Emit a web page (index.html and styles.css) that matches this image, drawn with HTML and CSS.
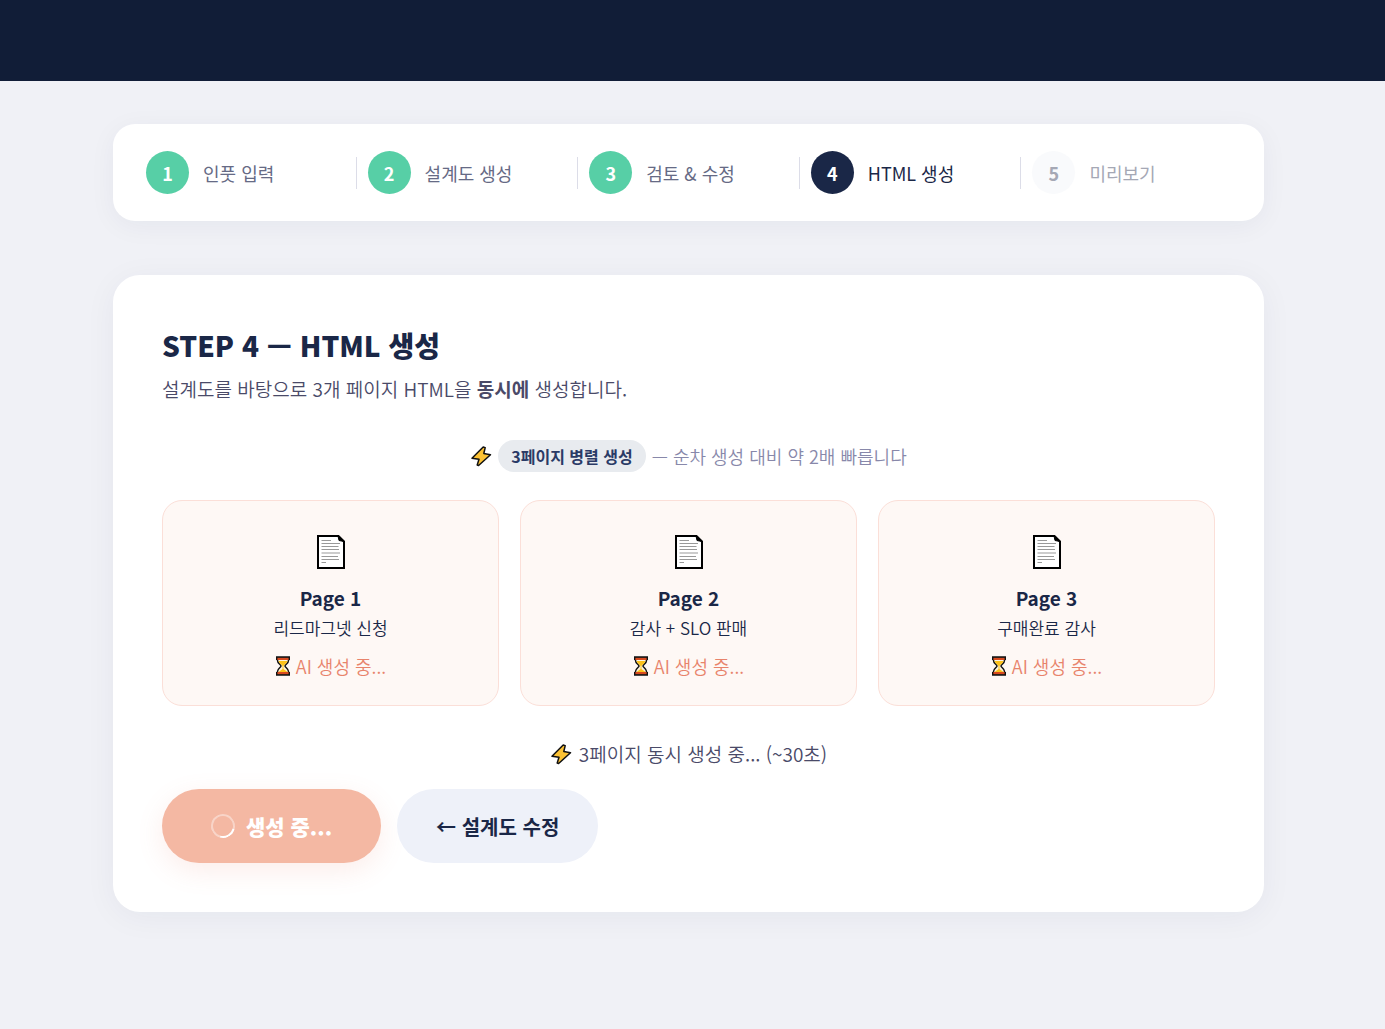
FILE: index.html
```html
<!DOCTYPE html>
<html lang="ko">

<head>
  <meta charset="UTF-8">
  <meta name="viewport" content="width=device-width, initial-scale=1.0">
  <title>STEP 4 — HTML 생성</title>
  <link rel="stylesheet" href="styles.css">
</head>

<body>
  <!-- Shared icons -->
  <svg class="sprite" aria-hidden="true">
    <symbol id="icon-bolt" viewBox="0 0 22 24">
      <path d="M13.200 3 L2 14.200 L9 15.200 L7.200 21 L8.600 21.500 L20.500 10.800 L13.800 9.500 L15.200 3.600 Z" fill="#fcc234" stroke="#111" stroke-width="1.500" stroke-linejoin="round" />
    </symbol>
    <symbol id="icon-page" viewBox="0 0 30 36">
      <path d="M2 2 H22.500 L28 7.500 V34 H2 Z" fill="#fff" stroke="#000" stroke-width="2" />
      <path d="M22 2 L23 6.500 L28 7.500 Z" fill="#000" stroke="#000" stroke-width="1" />
      <path d="M5.500 6.500H15M5.500 9.500H24M5.500 12.500H22.500M5.500 15.500H23M5.500 19H24M5.500 22.500H22M5.500 25.500H23M5.500 28.500H10" stroke="#999" stroke-width="1" />
    </symbol>
    <symbol id="icon-hourglass" viewBox="0 0 16 20">
      <path d="M2.500 2 H13.500 V4.500 C13.500 7.500 10 8.500 10 10 S13.500 12.500 13.500 15.500 V18 H2.500 V15.500 C2.500 12.500 6 11.500 6 10 S2.500 7.500 2.500 4.500 Z" fill="#fdf3dc" stroke="#111" stroke-width="1.500" />
      <path d="M3.500 5 H12.500 C12 7.500 9 8.500 8.500 10 V13 L12.500 16 H3.500 L7.500 13 V10 C7 8.500 4 7.500 3.500 5 Z" fill="#fcc21b" />
      <path d="M2 1.500 H14 V4 H2 Z M2 16 H14 V18.500 H2 Z" fill="#d84a1f" />
      <path d="M1 1 H15 M1 19 H15 M1.700 1 V4 M14.300 1 V4 M1.700 16 V19 M14.300 16 V19" stroke="#111" stroke-width="1.400" />
    </symbol>
  </svg>

  <header class="topbar"></header>

  <main class="container">
    <!-- Step indicator -->
    <ol class="steps">
      <li class="step done"><span class="step-num">1</span><span>인풋 입력</span></li>
      <li class="divider" role="presentation"></li>
      <li class="step done"><span class="step-num">2</span><span>설계도 생성</span></li>
      <li class="divider" role="presentation"></li>
      <li class="step done"><span class="step-num">3</span><span>검토 &amp; 수정</span></li>
      <li class="divider" role="presentation"></li>
      <li class="step active" aria-current="step"><span class="step-num">4</span><span>HTML 생성</span></li>
      <li class="divider" role="presentation"></li>
      <li class="step"><span class="step-num">5</span><span>미리보기</span></li>
    </ol>

    <section class="card">
      <h1>STEP 4 — HTML 생성</h1>
      <p class="desc">설계도를 바탕으로 3개 페이지 HTML을 <strong>동시에</strong> 생성합니다.</p>

      <p class="notice">
        <svg class="bolt" aria-hidden="true"><use href="#icon-bolt" /></svg>
        <span class="badge">3페이지 병렬 생성</span>
        <span>— 순차 생성 대비 약 2배 빠릅니다</span>
      </p>

      <!-- Page progress -->
      <div class="pages">
        <article class="page">
          <svg class="page-icon" aria-hidden="true"><use href="#icon-page" /></svg>
          <h2>Page 1</h2>
          <p class="page-name">리드마그넷 신청</p>
          <p class="page-status"><svg class="hourglass" aria-hidden="true"><use href="#icon-hourglass" /></svg>AI 생성 중...</p>
        </article>
        <article class="page">
          <svg class="page-icon" aria-hidden="true"><use href="#icon-page" /></svg>
          <h2>Page 2</h2>
          <p class="page-name">감사 + SLO 판매</p>
          <p class="page-status"><svg class="hourglass" aria-hidden="true"><use href="#icon-hourglass" /></svg>AI 생성 중...</p>
        </article>
        <article class="page">
          <svg class="page-icon" aria-hidden="true"><use href="#icon-page" /></svg>
          <h2>Page 3</h2>
          <p class="page-name">구매완료 감사</p>
          <p class="page-status"><svg class="hourglass" aria-hidden="true"><use href="#icon-hourglass" /></svg>AI 생성 중...</p>
        </article>
      </div>

      <p class="progress"><svg class="bolt" aria-hidden="true"><use href="#icon-bolt" /></svg>3페이지 동시 생성 중... (~30초)</p>

      <div class="actions">
        <button type="button" class="btn btn-primary" disabled><span class="spinner"></span>생성 중...</button>
        <button type="button" class="btn btn-secondary">← 설계도 수정</button>
      </div>
    </section>
  </main>
</body>

</html>
```
FILE: styles.css
```css
* {
  box-sizing: border-box;
}

body {
  font-family: "Noto Sans CJK KR", sans-serif;
  font-weight: 350;
  background: #f0f1f6;
  margin: 0;
  color: #1a2747;
}

h1, h2, p, ol {
  margin: 0;
  padding: 0;
}

.sprite {
  display: none;
}

.topbar {
  height: 81px;
  background: #111d37;
}

.container {
  padding: 43px 121px 80px 113px;
}

.steps {
  display: flex;
  align-items: center;
  list-style: none;
  padding: 27px 33px;
  margin-bottom: 54px;
  background: #fff;
  border-radius: 22px;
  box-shadow: 0 5px 27px rgba(26, 39, 71, 0.05);
}

.step {
  display: flex;
  flex: 1;
  align-items: center;
  gap: 14px;
  font-size: 18px;
  font-weight: 400;
  white-space: nowrap;
  color: #a5a8b5;
}

.step-num {
  display: flex;
  align-items: center;
  justify-content: center;
  width: 43px;
  height: 43px;
  border-radius: 50%;
  background: #f9fafc;
  font-size: 18px;
  font-weight: 700;
}

.done {
  color: #666a85;
}

.done .step-num {
  background: #57cfa6;
  color: #fff;
}

.active {
  color: #1a2747;
}

.active .step-num {
  background: #1a2747;
  color: #fff;
}

.divider {
  width: 1px;
  height: 32px;
  margin: 0 11px;
  background: #dcdde8;
}

.card {
  padding: 49px;
  background: #fff;
  border-radius: 27px;
  box-shadow: 0 5px 32px rgba(26, 39, 71, 0.05);
}

h1 {
  font-size: 28px;
  font-weight: 800;
  line-height: 42px;
}

.desc {
  margin-top: 7px;
  font-size: 19px;
  line-height: 32px;
  color: #4a4a68;
}

.notice {
  display: flex;
  align-items: center;
  justify-content: center;
  gap: 6px;
  margin: 35px 0 28px;
  font-size: 18px;
  line-height: 32px;
  color: #8888aa;
}

.badge {
  padding: 0 13px;
  border-radius: 16px;
  background: #e8ebef;
  font-size: 16px;
  font-weight: 700;
  color: #2a3a66;
}

.bolt {
  width: 22px;
  height: 24px;
}

.pages {
  display: grid;
  grid-template-columns: repeat(3, 1fr);
  gap: 21px;
}

.page {
  display: flex;
  flex-direction: column;
  align-items: center;
  padding: 33px 20px 25px;
  border: 1px solid #fbdfd8;
  border-radius: 20px;
  background: #fef8f5;
}

.page-icon {
  width: 30px;
  height: 36px;
}

h2 {
  margin-top: 12px;
  font-size: 19px;
  font-weight: 600;
  line-height: 32px;
}

.page-name {
  font-size: 17px;
  line-height: 28px;
}

.page-status {
  display: flex;
  align-items: center;
  gap: 5px;
  margin-top: 10px;
  font-size: 18px;
  line-height: 28px;
  color: #e8836b;
}

.hourglass {
  width: 16px;
  height: 20px;
}

.progress {
  display: flex;
  align-items: center;
  justify-content: center;
  gap: 7px;
  margin: 32px 0 19px;
  font-size: 19px;
  line-height: 32px;
  color: #4a4a68;
}

.actions {
  display: flex;
  gap: 16px;
}

.btn {
  display: flex;
  align-items: center;
  gap: 11px;
  height: 74px;
  border: none;
  border-radius: 37px;
  font-family: inherit;
  cursor: pointer;
}

.btn-primary {
  padding: 0 49px;
  background: #f4b8a3;
  box-shadow: 0 8px 27px rgba(232, 131, 107, 0.14);
  font-size: 21px;
  font-weight: 800;
  color: #fff;
}

.btn-primary:disabled {
  cursor: not-allowed;
}

.btn-secondary {
  padding: 0 39px;
  background: #eef1f9;
  font-size: 20px;
  font-weight: 700;
  color: #1a2747;
}

.spinner {
  width: 24px;
  height: 24px;
  border: 2px solid rgba(255, 255, 255, 0.4);
  border-bottom-color: #fff;
  border-radius: 50%;
  transform: rotate(-30deg);
}
```
